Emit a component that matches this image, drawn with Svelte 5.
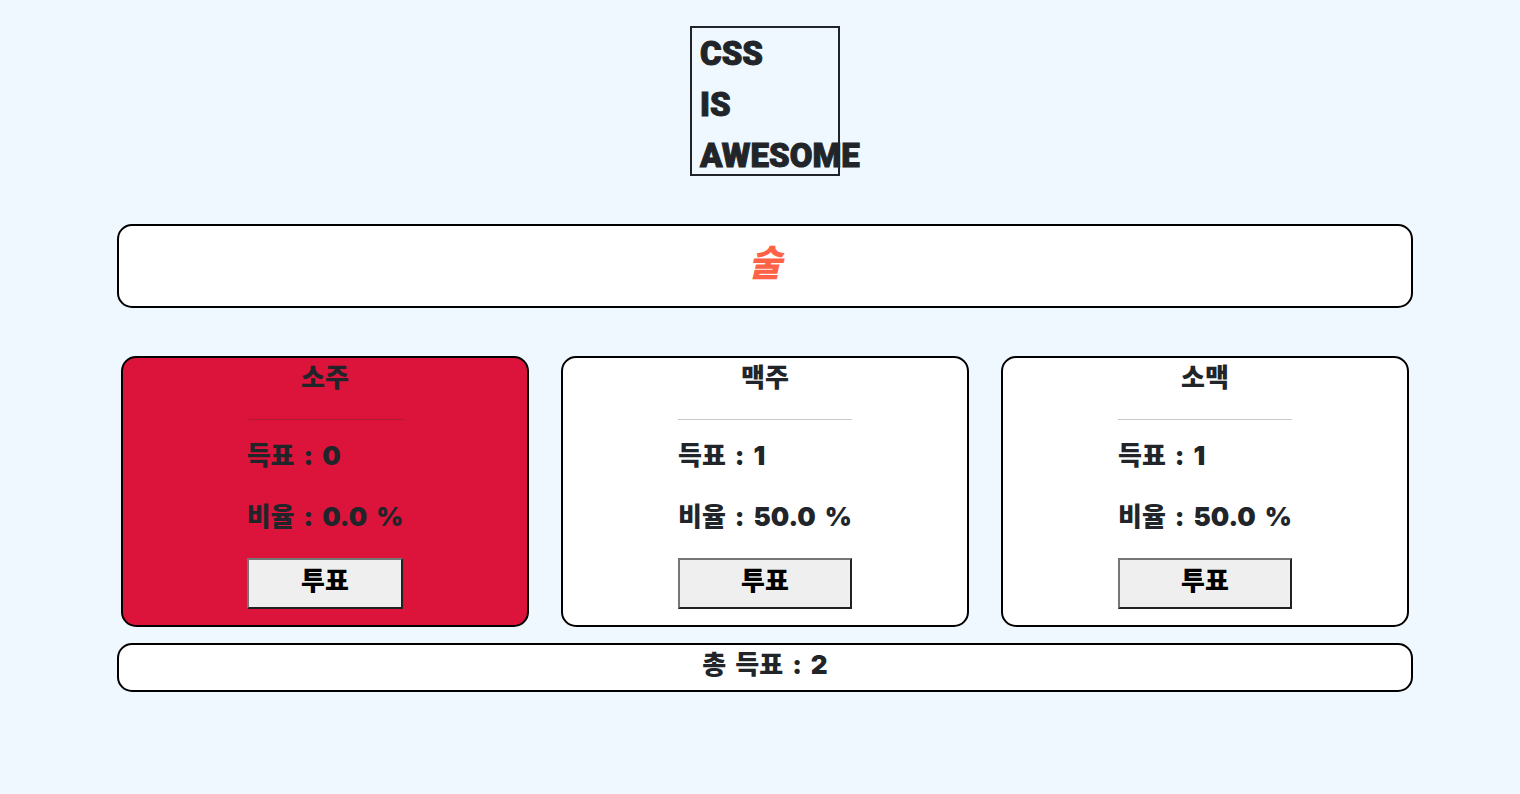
<script>
  const candidates = [
    { name: '소주', votes: 0 },
    { name: '맥주', votes: 1 },
    { name: '소맥', votes: 1 }
  ];
  const total = candidates.reduce((sum, c) => sum + c.votes, 0);
  const least = Math.min(...candidates.map((c) => c.votes));
  const ratio = (votes) => ((votes / total) * 100).toFixed(1);
</script>

<main>
  <a class="logo" href="/">CSS<br />IS<br />AWESOME</a>

  <h1 class="panel title">술</h1>

  <section class="cards">
    {#each candidates as c}
      <article class="panel card" class:losing={c.votes === least}>
        <h2>{c.name}</h2>
        <div class="body">
          <hr />
          <p class="stat"><b>득표</b> <span>:</span> <span>{c.votes}</span></p>
          <p class="stat"><b>비율</b> <span>:</span> <span>{ratio(c.votes)}</span> <span>%</span></p>
          <button type="button">투표</button>
        </div>
      </article>
    {/each}
  </section>

  <footer class="panel stat total"><b>총</b> <b>득표</b> <span>:</span> <span>{total}</span></footer>
</main>

<style>
  :global(body) {
    background: #f0f8ff;
  }

  main {
    box-sizing: border-box;
    max-width: 1320px;
    margin: 0 auto;
    padding: 26px 7px 0 17px;
    display: flex;
    flex-direction: column;
    color: #212529;
    font-family: Inter, "Noto Sans CJK KR", sans-serif;
    font-weight: 900;
    font-size: 26px;
    line-height: 39px;
  }

  .panel {
    box-sizing: border-box;
    border: 2px solid #000;
    border-radius: 15px;
    background: #fff;
  }

  .logo {
    box-sizing: border-box;
    align-self: center;
    width: 150px;
    height: 150px;
    border: 2px solid #212529;
    padding-left: 8px;
    color: inherit;
    text-decoration: none;
    font-family: Roboto, sans-serif;
    font-size: 33px;
    line-height: 51px;
    white-space: nowrap;
    -webkit-text-stroke: 1px;
  }

  .title {
    margin: 48px 0;
    padding: 13px 0 19px;
    color: tomato;
    font-size: 36px;
    line-height: 48px;
    font-style: italic;
    font-weight: 900;
    text-align: center;
  }

  .cards {
    display: grid;
    grid-template-columns: repeat(3, 1fr);
    gap: 32px;
    padding: 0 4px;
  }

  .card {
    display: flex;
    flex-direction: column;
    align-items: center;
    padding-bottom: 16px;
  }

  .losing {
    background: crimson;
  }

  h2 {
    margin: 0;
    font: inherit;
  }

  .body {
    display: flex;
    flex-direction: column;
  }

  hr {
    width: 100%;
    box-sizing: border-box;
    margin: 22px 0 16px;
    border: 0;
    border-top: 1px solid #212529;
    opacity: 0.25;
  }

  .stat {
    display: flex;
    gap: 9px;
    white-space: nowrap;
  }

  .stat b {
    font-weight: 900;
  }

  p {
    margin: 0 0 22px;
  }

  button {
    padding: 1px 6px 7px;
    border: 2px solid;
    border-color: #767676 #212121 #212121 #767676;
    border-radius: 0;
    background: #efefef;
    color: #000;
    font: inherit;
  }

  .total {
    justify-content: center;
    margin-top: 16px;
    padding: 0 0 6px;
  }
</style>
